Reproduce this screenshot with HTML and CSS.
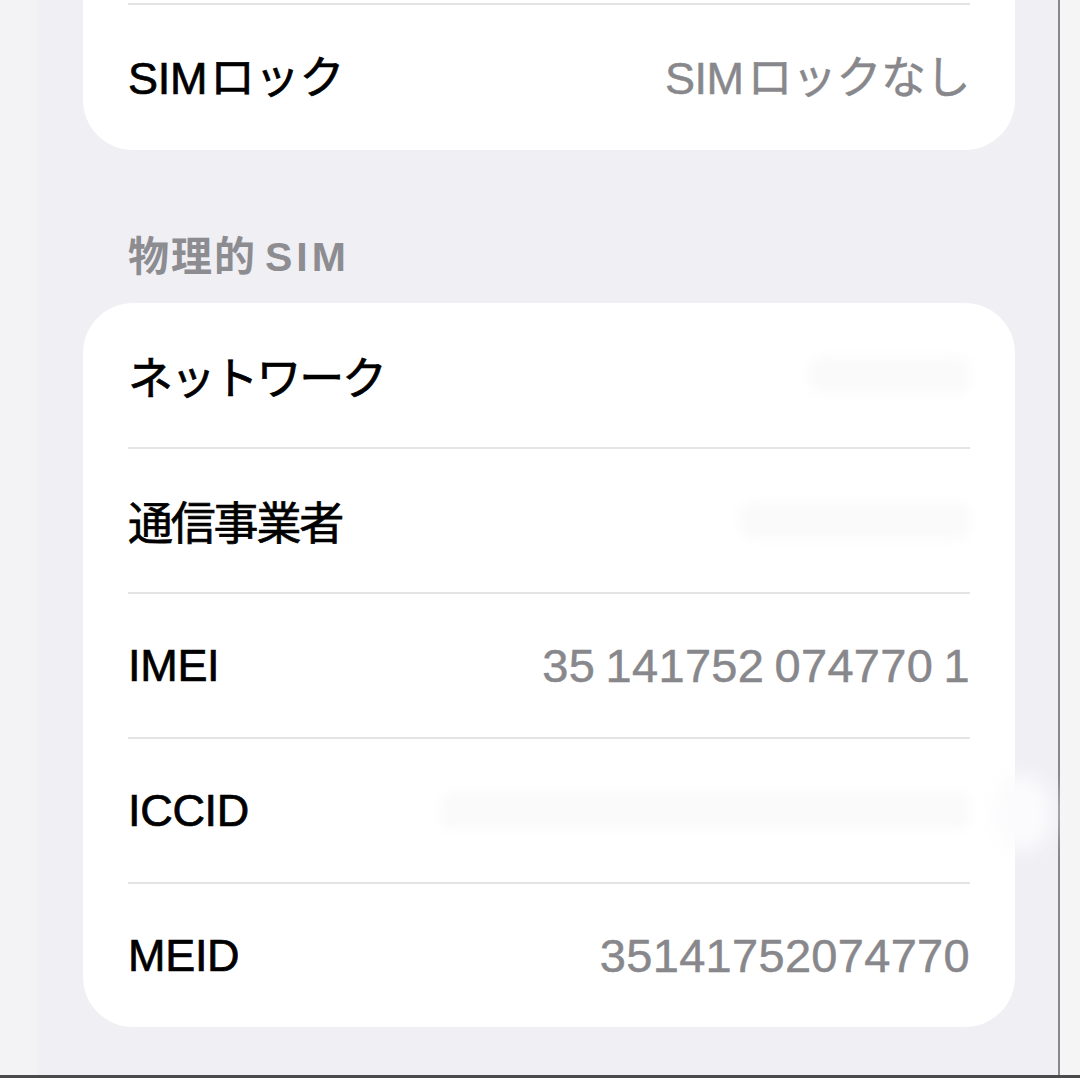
FILE: index.html
```html
<!DOCTYPE html>
<html lang="ja">
<head>
<meta charset="utf-8">
<title>SIM</title>
<link rel="stylesheet" href="styles.css">
</head>
<body>
<div class="frame">
  <div class="strip-left"></div>
  <main class="phone">
    <section class="card card-top">
      <div class="row">
        <span class="label">SIM<span class="gap">ロック</span></span>
        <span class="value value-ja">SIM<span class="gap">ロックなし</span></span>
      </div>
    </section>

    <h2 class="section-title">物理的<span class="gap">SIM</span></h2>

    <section class="card card-main">
      <div class="row">
        <span class="label ja">ネットワーク</span>
        <span class="redact redact-net"></span>
      </div>
      <div class="row">
        <span class="label ja">通信事業者</span>
        <span class="redact redact-carrier"></span>
      </div>
      <div class="row">
        <span class="label">IMEI</span>
        <span class="value">35 141752 074770 1</span>
      </div>
      <div class="row">
        <span class="label">ICCID</span>
        <span class="redact redact-iccid"></span>
      </div>
      <div class="row">
        <span class="label">MEID</span>
        <span class="value">35141752074770</span>
      </div>
      <span class="glare"></span>
    </section>
  </main>
  <div class="divider"></div>
  <div class="strip-right"></div>
</div>
</body>
</html>
```

FILE: styles.css
```css
html, body {
  margin: 0;
  padding: 0;
}

body {
  width: 1080px;
  height: 1078px;
  overflow: hidden;
  background: #f4f4f5;
  font-family: "Liberation Sans", "Noto Sans CJK JP", sans-serif;
}

.frame {
  display: flex;
  height: 1075px;
  border-bottom: 3px solid #4a4a4d;
}

.strip-left {
  width: 38px;
  background: #f3f3f5;
}

.phone {
  width: 1020px;
  background: #efeff4;
  padding: 0 43px 0 45px;
  box-sizing: border-box;
}

.divider {
  width: 2px;
  background: #88888b;
}

.strip-right {
  flex: 1;
  background: #f5f5f6;
}

.card {
  background: #ffffff;
  border-radius: 50px;
  position: relative;
}

.card-top {
  border-radius: 0 0 50px 50px;
  padding-top: 3px;
}

.card-top .row {
  border-top: 2px solid #e4e4e7;
  height: 147px;
  padding-bottom: 6px;
  box-sizing: border-box;
}

.row {
  margin: 0 45px;
  height: 143px;
  display: flex;
  align-items: center;
  justify-content: space-between;
}

.card-main .row:first-child {
  height: 144px;
}

.row + .row {
  border-top: 2px solid #e4e4e7;
}

.label {
  font-size: 45px;
  color: #000000;
  letter-spacing: -0.3px;
  -webkit-text-stroke: 0.7px #000000;
}

.label.ja {
  letter-spacing: -2.2px;
}

.gap {
  margin-left: 3px;
}

.value {
  font-size: 47px;
  color: #88888c;
  letter-spacing: 0.3px;
  word-spacing: -3px;
  -webkit-text-stroke: 0.5px #88888c;
}

.value.value-ja {
  font-size: 45px;
  letter-spacing: -0.5px;
}

.value-ja .gap {
  margin-left: 4px;
}

.section-title {
  margin: 0;
  padding: 84px 0 23px 45px;
  font-size: 41px;
  line-height: 46px;
  font-weight: 700;
  letter-spacing: 2px;
  color: #8c8c91;
}

.section-title .gap {
  margin-left: 8px;
  letter-spacing: 4px;
}

.redact {
  display: block;
  height: 36px;
  background: #fafafb;
  border-radius: 10px;
  filter: blur(6px);
}

.redact-net { width: 160px; }
.redact-carrier { width: 230px; }
.redact-iccid { width: 530px; }

.glare {
  position: absolute;
  right: -38px;
  top: 470px;
  width: 60px;
  height: 80px;
  border-radius: 50%;
  background: #fbfbfd;
  filter: blur(10px);
}
```
